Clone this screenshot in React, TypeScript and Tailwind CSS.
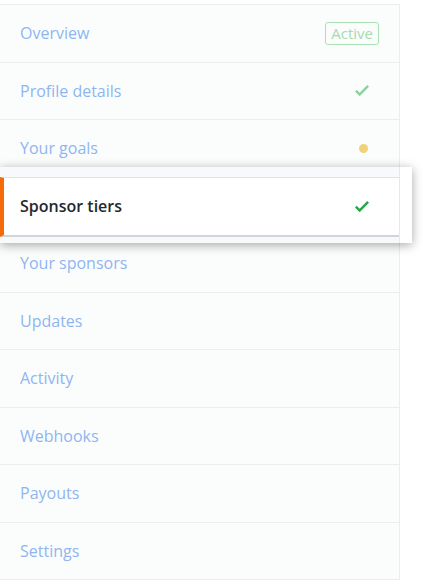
type Item = { label: string; status?: 'active' | 'done' | 'pending' };

const items: Item[] = [
  { label: 'Overview', status: 'active' },
  { label: 'Profile details', status: 'done' },
  { label: 'Your goals', status: 'pending' },
  { label: 'Sponsor tiers', status: 'done' },
  { label: 'Your sponsors' },
  { label: 'Updates' },
  { label: 'Activity' },
  { label: 'Webhooks' },
  { label: 'Payouts' },
  { label: 'Settings' },
];

const SELECTED = 'Sponsor tiers';

// old-style octicon check
function CheckIcon({ className }: { className: string }) {
  return (
    <svg viewBox="0 0 12 16" width="14" height="18.7" className={className} fill="currentColor">
      <path d="M12 5l-8 8-4-4 1.5-1.5L4 10l6.5-6.5L12 5z" />
    </svg>
  );
}

function Status({ status, strong }: { status?: Item['status']; strong?: boolean }) {
  if (status === 'active') {
    return (
      <span className="rounded-[3px] border border-[#a8e2b4] px-[5px] text-[15px] leading-[21px] text-[#a9d9ad]">
        Active
      </span>
    );
  }
  if (status === 'done') {
    return <CheckIcon className={strong ? 'mr-[10px] text-[#28a745]' : 'mr-[10px] text-[#8fd19e]'} />;
  }
  if (status === 'pending') {
    return <span className="mr-[11px] h-[9px] w-[9px] rounded-full bg-[#f0d27a]" />;
  }
  return null;
}

export default function App() {
  return (
    <div
      className="min-h-screen bg-white pt-[4px]"
      style={{ fontFamily: '"Open Sans", "Noto Sans", sans-serif' }}
    >
      <nav className="w-[400px] border-r border-t border-[#eaeef0] bg-[#fbfdfd]">
        {items.map((it) => {
          const selected = it.label === SELECTED;
          return (
            <div key={it.label} className="relative">
              <div className="flex h-[57.5px] items-center justify-between border-b border-[#eaeef0] px-[20px]">
                {!selected && (
                  <>
                    <span className="text-[16px] text-[#8fb5f0]">{it.label}</span>
                    <Status status={it.status} />
                  </>
                )}
              </div>

              {selected && (
                <div className="absolute -top-[11px] -bottom-[8px] left-0 z-10 w-[412px] bg-white shadow-[0_2px_10px_rgba(0,0,0,0.35)]">
                  <div className="flex h-full w-[400px] flex-col border-r border-[#e6e9ec] bg-[#f7f9fb] pt-[10px] pb-[6px]">
                    <div className="flex flex-1 items-center justify-between border-t border-b-2 border-t-[#dfe3e8] border-b-[#d1d5da] border-l-4 border-l-[#f66a0a] bg-white pl-[16px] pr-[20px]">
                      <span className="text-[16px] font-semibold text-[#24292e]">{it.label}</span>
                      <Status status={it.status} strong />
                    </div>
                  </div>
                </div>
              )}
            </div>
          );
        })}
      </nav>
    </div>
  );
}
